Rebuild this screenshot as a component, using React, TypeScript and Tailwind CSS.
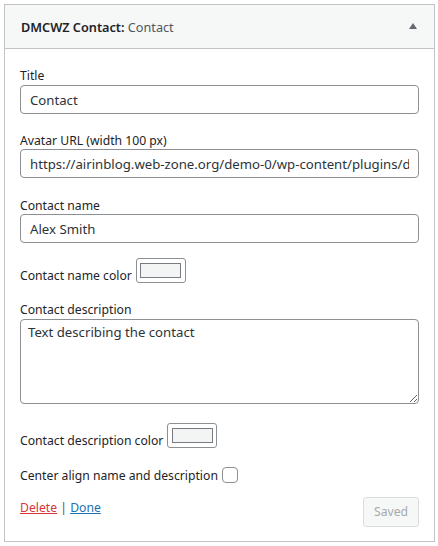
import React from "react";

const font = { fontFamily: '"Noto Sans", "Open Sans", sans-serif' };

function ColorButton() {
  return (
    <div className="flex h-[25px] w-[50px] items-center justify-center rounded-[3px] border border-[#8c8f94] bg-white">
      <div className="h-[15px] w-[41px] border border-[#787c82] bg-[#f3f4f4]" />
    </div>
  );
}

export default function App() {
  return (
    <div className="min-h-[546px] bg-white pt-[4px] pl-[4px] text-[#1d2327]" style={font}>
      <div className="w-[431px] border border-[#c3c4c7] bg-white">
        <div className="flex h-[44px] items-center justify-between border-b border-[#c3c4c7] bg-[#f6f7f7] pl-[16px] pr-[16px]">
          <div className="text-[12.7px] leading-[18px]">
            <span className="font-semibold text-[#1d2327]">DMCWZ Contact:</span>
            <span className="text-[#50575e]"> Contact</span>
          </div>
          <svg width="8" height="6" viewBox="0 0 8 6" className="mr-[1px] mt-[-1px]">
            <polygon points="4,0 8,6 0,6" fill="#646970" />
          </svg>
        </div>
        <div className="px-[15px] pt-[17px] pb-[14px] text-[12.2px]">
          <div className="h-[18px] leading-[20px]">Title</div>
          <input
            readOnly
            defaultValue="Contact"
            className="mt-[1px] block h-[29px] w-[399px] rounded-[4px] border border-[#8c8f94] px-[9px] text-[13.2px] text-[#2c3338] outline-none"
          />
          <div className="mt-[17px] h-[18px] leading-[20px]">Avatar URL (width 100 px)</div>
          <input
            readOnly
            defaultValue="https://airinblog.web-zone.org/demo-0/wp-content/plugins/dmcwz-contact/avatar.png"
            className="block h-[29px] w-[399px] rounded-[4px] border border-[#8c8f94] px-[9px] text-[13.2px] text-[#2c3338] outline-none"
          />
          <div className="mt-[18px] h-[18px] leading-[20px]">Contact name</div>
          <input
            readOnly
            defaultValue="Alex Smith"
            className="block h-[29px] w-[399px] rounded-[4px] border border-[#8c8f94] px-[9px] text-[13.2px] text-[#2c3338] outline-none"
          />
          <div className="mt-[15px] flex items-end gap-[4px]">
            <span className="mb-[-2px] leading-[18px]">Contact name color</span>
            <ColorButton />
          </div>
          <div className="mt-[17px] h-[18px] leading-[20px]">Contact description</div>
          <textarea
            readOnly
            defaultValue="Text describing the contact"
            className="mt-[1px] block h-[85px] w-[399px] resize-y rounded-[4px] border border-[#8c8f94] px-[7px] pt-[2px] text-[13.2px] leading-[20px] text-[#2c3338] outline-none"
          />
          <div className="mt-[19px] flex items-end gap-[4px]">
            <span className="mb-[-2px] leading-[18px]">Contact description color</span>
            <ColorButton />
          </div>
          <div className="mt-[18px] flex items-center gap-[4px]">
            <span className="h-[18px] leading-[20px]">Center align name and description</span>
            <span className="block h-[16px] w-[16px] rounded-[4px] border border-[#8c8f94] bg-white" />
          </div>
          <div className="mt-[13px] flex items-start justify-between">
            <div className="pt-[2px] leading-[18px]">
              <a href="#" className="text-[#d63638] underline">Delete</a>
              <span className="text-[#50575e]"> | </span>
              <a href="#" className="text-[#2271b1] underline">Done</a>
            </div>
            <button className="h-[30px] w-[56px] rounded-[3px] border border-[#dcdcde] bg-[#f6f7f7] text-[12.2px] text-[#a7aaad]">
              Saved
            </button>
          </div>
        </div>
      </div>
    </div>
  );
}
